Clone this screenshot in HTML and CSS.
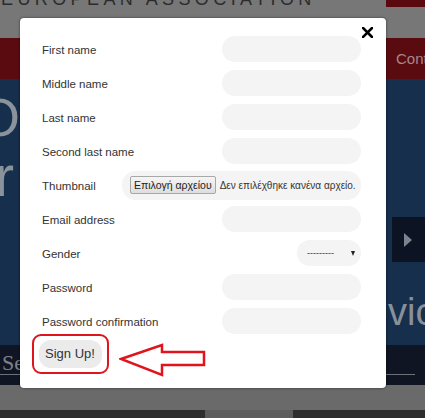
FILE: index.html
```html
<!DOCTYPE html>
<html>
<head>
<meta charset="utf-8">
<link rel="stylesheet" href="styles.css">
</head>
<body>
<div class="page">
  <header class="brand">
    <span class="brand-name">EUROPEAN ASSOCIATION</span>
    <span class="brand-btn"></span>
  </header>
  <nav class="nav"><span class="nav-link">Contact</span></nav>
  <section class="hero">
    <div class="hero-left">
      <div class="big big-o">O</div>
      <div class="big big-r">r </div>
    </div>
    <div class="hero-right">
      <div class="slider-btn"><span class="tri"></span></div>
      <div class="big-vic">vices</div>
    </div>
  </section>
  <section class="search-band">
    <div class="search-line"><span class="search-text">Se</span></div>
  </section>
  <div class="foot-gray"></div>
  <div class="foot-strip"><span class="strip-a"></span><span class="strip-gap"></span><span class="strip-b"></span></div>
</div>

<div class="modal">
  <svg class="close" width="11" height="11" viewBox="0 0 11 11"><path d="M1 1L10 10M10 1L1 10" stroke="#000" stroke-width="2.6" stroke-linecap="square"/></svg>
  <form class="form">
    <div class="row"><label class="lbl">First name</label><span class="inp"></span></div>
    <div class="row"><label class="lbl">Middle name</label><span class="inp"></span></div>
    <div class="row"><label class="lbl">Last name</label><span class="inp"></span></div>
    <div class="row"><label class="lbl">Second last name</label><span class="inp"></span></div>
    <div class="row"><label class="lbl">Thumbnail</label>
      <span class="file-pill"><span class="file-btn">Επιλογή αρχείου</span><span class="file-status">Δεν επιλέχθηκε κανένα αρχείο.</span></span></div>
    <div class="row"><label class="lbl">Email address</label><span class="inp"></span></div>
    <div class="row"><label class="lbl">Gender</label>
      <span class="sel"><span class="sel-val">---------</span><span class="caret"></span></span></div>
    <div class="row"><label class="lbl">Password</label><span class="inp"></span></div>
    <div class="row"><label class="lbl">Password confirmation</label><span class="inp"></span></div>
  </form>
  <div class="actions">
    <div class="highlight"><span class="signup">Sign Up!</span></div>
    <svg class="arrow" width="88" height="36" viewBox="0 0 88 36"><path d="M2 17L43 3L43 10L85 10L85 23L43 23L43 33Z" fill="#fff" stroke="#e0141c" stroke-width="2.5" stroke-linejoin="miter"/></svg>
  </div>
</div>
</body>
</html>
```
FILE: styles.css
```css
* { box-sizing: border-box; }
html, body { margin: 0; padding: 0; }
body {
  width: 425px;
  height: 418px;
  overflow: hidden;
  position: relative;
  font-family: "Liberation Sans", Arial, sans-serif;
  background: #6a6a6a;
}
.page { width: 425px; display: flex; flex-direction: column; }

.brand {
  height: 38px;
  background: #777777;
  display: flex;
  justify-content: space-between;
  align-items: flex-start;
  overflow: hidden;
}
.brand-name {
  display: block;
  margin-top: -10px;
  margin-left: 1px;
  font-size: 18px;
  line-height: 18px;
  letter-spacing: 4.4px;
  color: #2c2c2c;
  white-space: nowrap;
}
.brand-btn { width: 39px; height: 7px; background: #5a0a0f; }

.nav {
  height: 41px;
  background: #5a0b10;
  display: flex;
  align-items: center;
  padding-left: 396px;
  overflow: hidden;
  white-space: nowrap;
}
.nav-link { color: #a9868a; font-size: 15px; }

.hero {
  height: 266px;
  background: #152f4d;
  display: flex;
  justify-content: space-between;
  overflow: hidden;
}
.hero-left { width: 20px; display: flex; flex-direction: column; padding-top: 11px; }
.big {
  display: flex;
  justify-content: flex-end;
  font-size: 54px;
  line-height: 54px;
  color: #8a929c;
  white-space: nowrap;
}
.big-r { margin-top: 5px; padding-right: 6px; font-size: 58px; }
.hero-right { width: 38px; display: flex; flex-direction: column; padding-top: 138px; }
.slider-btn {
  margin-left: 5px;
  height: 45px;
  background: #0c1424;
  display: flex;
  align-items: center;
  padding-left: 12px;
}
.tri {
  width: 0; height: 0;
  border-top: 7px solid transparent;
  border-bottom: 7px solid transparent;
  border-left: 8px solid #7b838f;
}
.big-vic {
  margin-top: 30px;
  font-size: 38px;
  line-height: 40px;
  color: #8a909a;
  white-space: nowrap;
  margin-left: 1px;
}

.search-band {
  height: 40px;
  background: #0f1523;
  padding: 6px 10px 0 0;
}
.search-line {
  height: 24px;
  border-bottom: 1px solid #6d727a;
  overflow: hidden;
}
.search-text {
  font-family: "Liberation Serif", serif;
  font-size: 22px;
  line-height: 24px;
  color: #7b818a;
  margin-left: 2px;
}
.foot-gray { height: 25px; background: #6a6a6a; }
.foot-strip { height: 8px; display: flex; }
.strip-a { width: 205px; background: #2e2e2e; }
.strip-gap { width: 88px; background: #5c5c5c; }
.strip-b { flex: 1; background: #2e2e2e; }

.modal {
  position: absolute;
  left: 20px;
  top: 18px;
  width: 366px;
  height: 370px;
  background: #fff;
  border-radius: 4px;
  box-shadow: 0 0 2px 1px rgba(0,0,0,0.25);
  padding: 18px 25px 13px 12px;
}
.close { position: absolute; right: 13px; top: 9px; }
.form {
  display: flex;
  flex-direction: column;
  gap: 8px;
  padding-left: 10px;
  margin: 0;
}
.row {
  height: 26px;
  display: flex;
  align-items: center;
  justify-content: space-between;
}
.lbl {
  font-size: 11.5px;
  color: #333;
  white-space: nowrap;
  padding-top: 1px;
}
.inp {
  width: 139px;
  height: 26px;
  border-radius: 13px;
  background: #f4f4f4;
}
.file-pill {
  flex: none;
  width: 239px;
  height: 29px;
  border-radius: 14px;
  background: #f4f4f4;
  display: flex;
  align-items: center;
  padding-left: 8px;
  white-space: nowrap;
}
.file-btn {
  height: 18px;
  padding: 0 3px;
  border: 1px solid #a8a8a8;
  border-radius: 2px;
  background: linear-gradient(#f6f6f6, #dedede);
  font-size: 10.5px;
  line-height: 16px;
  color: #222;
}
.file-status { margin-left: 4px; font-size: 10px; color: #333; }
.sel {
  width: 64px;
  height: 26px;
  border-radius: 13px;
  background: #f4f4f4;
  display: flex;
  align-items: center;
  padding-left: 10px;
}
.sel-val { font-size: 9px; color: #333; }
.caret {
  margin-left: auto;
  margin-right: 6px;
  width: 0; height: 0;
  border-left: 2.5px solid transparent;
  border-right: 2.5px solid transparent;
  border-top: 5px solid #222;
}
.actions { display: flex; align-items: flex-start; }
.highlight {
  border: 2.5px solid #e0141c;
  border-radius: 9px;
  padding: 3.5px 5.5px 4.5px 4.5px;
}
.signup {
  display: block;
  width: 63px;
  height: 28px;
  border-radius: 12px;
  background: #ebebeb;
  font-size: 13px;
  line-height: 28px;
  text-align: center;
  color: #333;
}
.arrow { margin-left: 10px; margin-top: 8px; }
```
